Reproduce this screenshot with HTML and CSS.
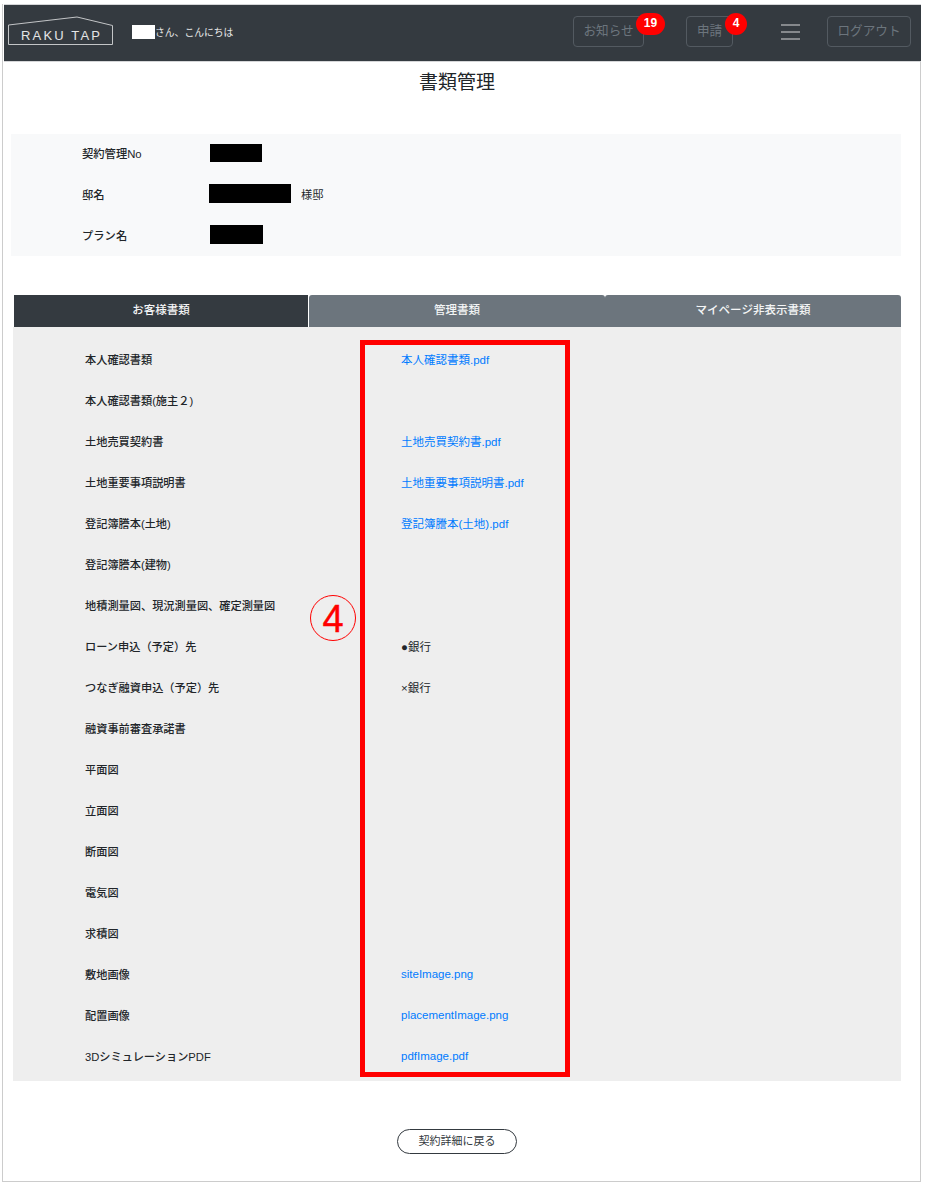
FILE: index.html
```html
<!DOCTYPE html>
<html lang="ja">
<head>
<meta charset="utf-8">
<title>書類管理</title>
<link rel="stylesheet" href="styles.css">
</head>
<body>
<div class="frame">
  <header class="topbar">
    <svg class="logo" width="108" height="32" viewBox="0 0 108 32">
      <path class="logo-line" d="M0.5 9 L69 1 L104.5 9.5 V28.5 H0.5 Z"/>
      <text class="logo-text" x="13" y="24" textLength="79" lengthAdjust="spacing">RAKU TAP</text>
    </svg>
    <div class="greeting"><span class="mask"></span><span>さん、こんにちは</span></div>
    <nav class="actions">
      <div class="btn-wrap notice"><span class="btn">お知らせ</span><span class="badge badge-wide">19</span></div>
      <div class="btn-wrap apply"><span class="btn">申請</span><span class="badge">4</span></div>
      <div class="burger"><i></i><i></i><i></i></div>
      <span class="btn logout">ログアウト</span>
    </nav>
  </header>
  <h1 class="title">書類管理</h1>
  <section class="info">
    <div class="info-row"><div class="info-label">契約管理No</div><div class="info-value"><span class="redact r1"></span></div></div>
    <div class="info-row"><div class="info-label">邸名</div><div class="info-value shift"><span class="redact r2"></span><span class="suffix">様邸</span></div></div>
    <div class="info-row"><div class="info-label">プラン名</div><div class="info-value"><span class="redact r3"></span></div></div>
  </section>
  <div class="tabs">
    <div class="tab active">お客様書類</div>
    <div class="tab">管理書類</div>
    <div class="tab last">マイページ非表示書類</div>
  </div>
  <section class="docs">
    <div class="doc"><div class="doc-label">本人確認書類</div><a class="doc-link" href="#">本人確認書類.pdf</a></div>
    <div class="doc"><div class="doc-label">本人確認書類(施主２)</div></div>
    <div class="doc"><div class="doc-label">土地売買契約書</div><a class="doc-link" href="#">土地売買契約書.pdf</a></div>
    <div class="doc"><div class="doc-label">土地重要事項説明書</div><a class="doc-link" href="#">土地重要事項説明書.pdf</a></div>
    <div class="doc"><div class="doc-label">登記簿謄本(土地)</div><a class="doc-link" href="#">登記簿謄本(土地).pdf</a></div>
    <div class="doc"><div class="doc-label">登記簿謄本(建物)</div></div>
    <div class="doc"><div class="doc-label">地積測量図、現況測量図、確定測量図</div></div>
    <div class="doc"><div class="doc-label">ローン申込（予定）先</div><span class="doc-text">●銀行</span></div>
    <div class="doc"><div class="doc-label">つなぎ融資申込（予定）先</div><span class="doc-text">×銀行</span></div>
    <div class="doc"><div class="doc-label">融資事前審査承諾書</div></div>
    <div class="doc"><div class="doc-label">平面図</div></div>
    <div class="doc"><div class="doc-label">立面図</div></div>
    <div class="doc"><div class="doc-label">断面図</div></div>
    <div class="doc"><div class="doc-label">電気図</div></div>
    <div class="doc"><div class="doc-label">求積図</div></div>
    <div class="doc"><div class="doc-label">敷地画像</div><a class="doc-link" href="#">siteImage.png</a></div>
    <div class="doc"><div class="doc-label">配置画像</div><a class="doc-link" href="#">placementImage.png</a></div>
    <div class="doc"><div class="doc-label">3DシミュレーションPDF</div><a class="doc-link" href="#">pdfImage.pdf</a></div>
  </section>
  <div class="back-row"><a class="back" href="#">契約詳細に戻る</a></div>
  <div class="callout-box"></div>
  <div class="callout-num">4</div>
</div>
</body>
</html>
```
FILE: styles.css
```css
* { box-sizing: border-box; }
html, body { margin: 0; padding: 0; background: #fff; }
body {
  font-family: "Liberation Sans", "Noto Sans CJK JP", sans-serif;
  color: #212529;
}
.frame {
  position: relative;
  margin: 4px 0 0 2px;
  width: 919px;
  height: 1178px;
  border-left: 1px solid #ccc;
  border-right: 1px solid #ccc;
  border-bottom: 1px solid #ccc;
}
.topbar {
  display: flex;
  align-items: center;
  height: 58px;
  margin-left: 1px;
  margin-right: -1px;
  background: #343a40;
  border-top: 1px solid #d5d6d8;
  border-bottom: 1px solid #d5d6d8;
}
.logo { margin: 0 0 0 4px; flex: none; transform: translateY(-1px); }
.logo-line { fill: none; stroke: #c3c5c7; stroke-width: 1; }
.logo-text { fill: #e4e5e6; font-size: 13px; font-family: "Liberation Sans", sans-serif; }
.greeting {
  display: flex;
  align-items: center;
  margin: 0 0 2px 16px;
  color: #e8e9ea;
  font-size: 9.8px;
}
.mask { width: 23px; height: 14px; background: #fff; }
.actions { display: flex; align-items: center; margin: 0 0 3px auto; padding-right: 10px; }
.btn-wrap { position: relative; }
.btn {
  display: block;
  height: 31px;
  line-height: 29px;
  padding: 0 9px;
  font-size: 12.6px;
  color: #6c757d;
  border: 1px solid #535a61;
  border-radius: 4px;
  text-align: center;
}
.notice .btn { width: 71px; padding: 0; }
.apply { margin-left: 42px; }
.apply .btn { width: 47px; padding: 0; }
.logout { width: 84px; padding: 0; margin-left: 27px; }
.badge {
  position: absolute;
  top: -3px;
  left: 39px;
  width: 22px;
  height: 22px;
  border-radius: 11px;
  background: #f00;
  color: #fff;
  font-size: 12px;
  font-weight: 700;
  line-height: 21px;
  text-align: center;
}
.badge-wide { left: 63px; width: 29px; }
.burger { display: flex; flex-direction: column; gap: 5px; width: 19px; margin-left: 48px; }
.burger i { display: block; height: 2px; background: #85888c; }
.title {
  margin: 0;
  padding: 7px 9px 0 0;
  height: 72px;
  font-size: 19px;
  line-height: 28px;
  font-weight: 400;
  text-align: center;
}
.info {
  margin-left: 8px;
  width: 890px;
  height: 122px;
  background: #f8f9fa;
  display: grid;
  grid-auto-rows: 41px;
}
.info-row { display: flex; align-items: center; padding: 0 0 4px 71px; font-size: 11.3px; font-weight: 500; }
.info-label { width: 128px; }
.info-value { display: flex; align-items: center; }
.shift { margin-left: -1px; }
.redact { display: block; background: #000; }
.r1 { width: 52px; height: 18px; }
.r2 { width: 82px; height: 19px; }
.r3 { width: 53px; height: 19px; }
.suffix { margin-left: 10px; font-weight: 400; }
.tabs {
  display: grid;
  grid-template-columns: 295px 296px 296px;
  margin: 39px 0 0 11px;
  width: 887px;
  height: 32px;
}
.tab {
  background: #6c757d;
  color: #f4f5f6;
  font-size: 11.5px;
  font-weight: 500;
  line-height: 30px;
  text-align: center;
  border-radius: 3px 3px 0 0;
}
.tab.active { background: #343a40; border-right: 1px solid #fff; border-radius: 0; }
.docs {
  margin-left: 10px;
  width: 888px;
  height: 754px;
  padding: 11px 0 0 72px;
  background: #eee;
}
.doc { display: flex; align-items: center; height: 41px; }
.doc-label { width: 316px; font-size: 11.2px; font-weight: 500; }
.doc-link { color: #007bff; text-decoration: none; font-size: 11.5px; }
.doc-text { font-size: 11.5px; }
.back-row { display: flex; justify-content: center; margin: 48px 0 0 -9px; }
.back {
  display: block;
  width: 120px;
  height: 25px;
  line-height: 23px;
  text-align: center;
  font-size: 11px;
  color: #343a40;
  text-decoration: none;
  background: #fff;
  border: 1px solid #343a40;
  border-radius: 13px;
}
.callout-box {
  position: absolute;
  left: 357px;
  top: 336px;
  width: 210px;
  height: 737px;
  border: 5px solid #f00;
}
.callout-num {
  position: absolute;
  left: 307px;
  top: 591px;
  width: 46px;
  height: 46px;
  border: 1px solid #f00;
  border-radius: 50%;
  color: #f00;
  font-size: 38px;
  line-height: 47px;
  text-align: center;
  -webkit-text-stroke: 0.4px #f00;
}
```
